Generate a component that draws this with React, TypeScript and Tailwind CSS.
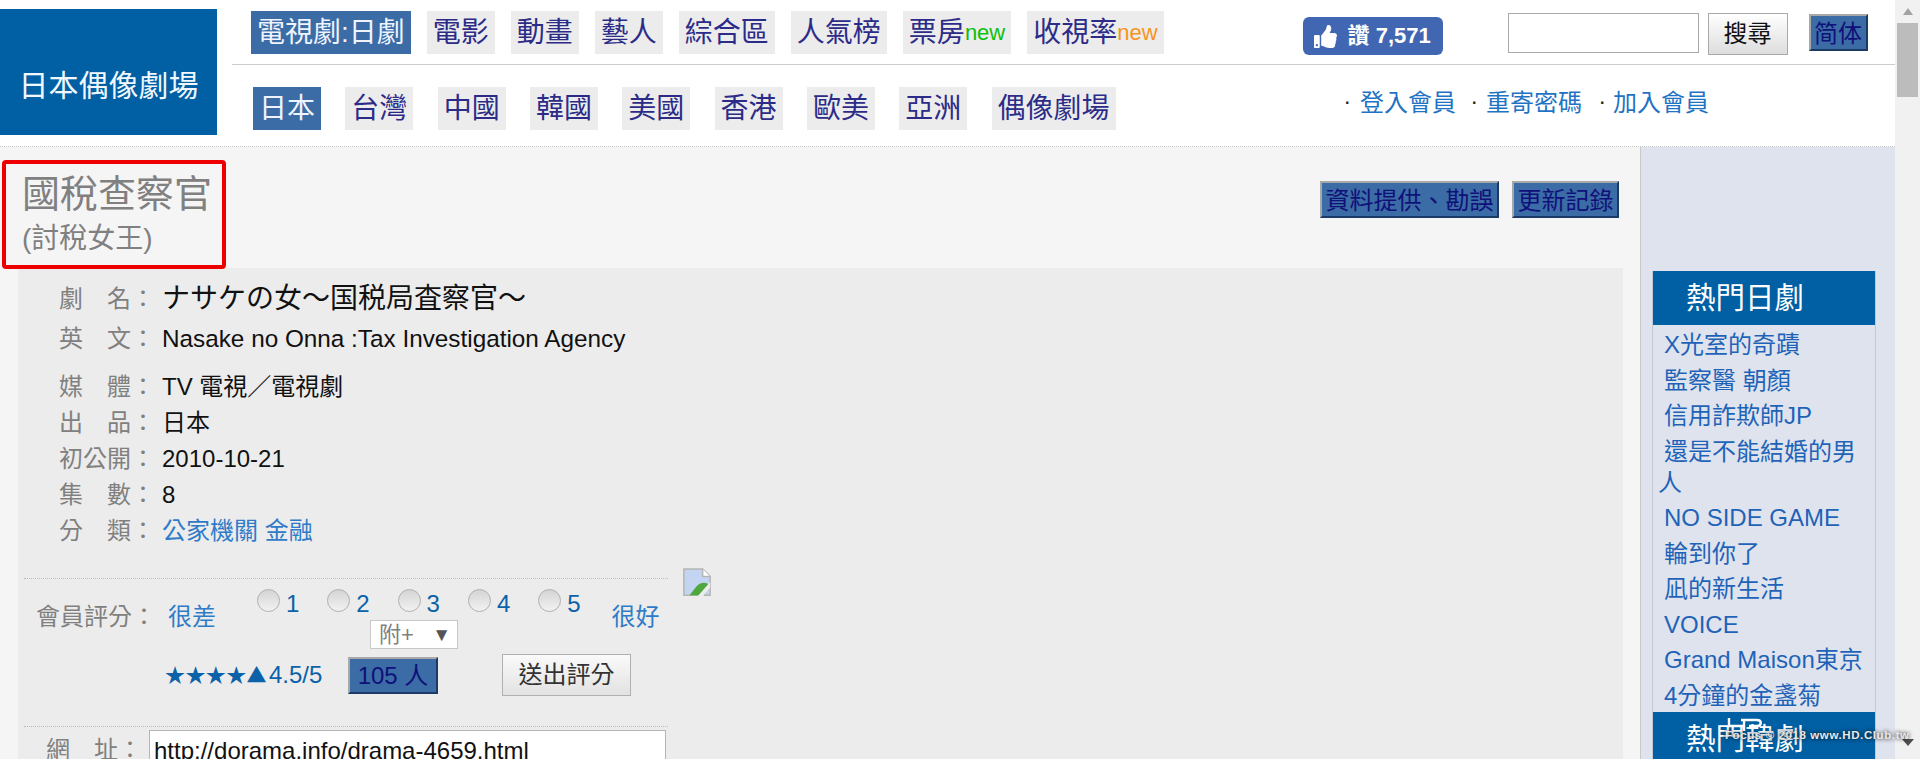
import React from "react";
import { FaThumbsUp } from "react-icons/fa";

const topNav = ["電影", "動畫", "藝人", "綜合區", "人氣榜"];
const subNav = ["台灣", "中國", "韓國", "美國", "香港", "歐美", "亞洲", "偶像劇場"];
const hot = ["X光室的奇蹟", "監察醫 朝顏", "信用詐欺師JP", "還是不能結婚的男人", "NO SIDE GAME", "輪到你了", "凪的新生活", "VOICE", "Grand Maison東京", "4分鐘的金盞菊"];

function NavItem({ children, active }: { children: React.ReactNode; active?: boolean }) {
  return (
    <a className={active ? "flex h-[43px] items-center bg-[#3b6ca5] px-[6px] text-[28px] leading-none whitespace-nowrap text-[#eef4ff]" : "flex h-[43px] items-center bg-[#ececec] px-[6px] text-[28px] leading-none whitespace-nowrap text-[#2c2c88]"}>
      {children}
    </a>
  );
}

function InfoRow({ label, children, className }: { label: string; children: React.ReactNode; className?: string }) {
  return (
    <div className={"flex items-center text-[24px] " + (className ?? "h-[36px]")}>
      <span className="w-[103px] shrink-0 whitespace-nowrap text-[#808080]">{label}</span>
      <span className="whitespace-nowrap text-[#111]">{children}</span>
    </div>
  );
}

function BlueBtn({ children, className }: { children: React.ReactNode; className: string }) {
  return (
    <a className={"flex items-center justify-center border-t-2 border-r-2 border-b-2 border-l-2 border-t-[#a8a8a8] border-r-[#1c3a66] border-b-[#1c3a66] border-l-[#a8a8a8] bg-[#3b6ca5] pt-[2px] text-[24px] leading-none whitespace-nowrap text-[#10107a] " + className}>
      {children}
    </a>
  );
}

function Radio({ n }: { n: number }) {
  return (
    <label className="flex w-[70.3px] items-start">
      <input type="radio" name="score" className="mt-[8px] h-[23px] w-[23px] appearance-none rounded-full border border-[#b0b0b0] bg-gradient-to-b from-[#d4d4d4] to-[#f2f2f2]" />
      <span className="mt-[8px] ml-[6px] text-[24px] leading-[30px] text-[#0b62a8]">{n}</span>
    </label>
  );
}

function HotHeader({ children }: { children: React.ReactNode }) {
  return <div className="flex h-[54px] shrink-0 items-center bg-[#0060a3] pl-[33px] text-[29.5px] leading-none text-white">{children}</div>;
}

export default function App() {
  return (
    <div className="relative flex h-[759px] w-[1920px] overflow-hidden bg-white [font-family:'Liberation_Sans','Noto_Sans_CJK_TC',sans-serif]">
      <div className="flex w-[1895px] shrink-0 flex-col">
        {/* header */}
        <header className="flex h-[147px] shrink-0 border-b border-dotted border-b-[#c8c8c8]">
          <div className="mt-[9px] flex h-[126px] w-[217px] shrink-0 items-center justify-center bg-[#0060a3] pt-[28px] text-[30px] leading-none whitespace-nowrap text-[#f2f8ff]">日本偶像劇場</div>
          <div className="ml-[15px] flex-1">
            <div className="flex h-[65px] items-start border-b border-b-[#cccccc] pt-[11px] pl-[19px]">
              <nav className="flex gap-[16px]">
                <NavItem active>電視劇:日劇</NavItem>
                {topNav.map((t) => <NavItem key={t}>{t}</NavItem>)}
                <NavItem>票房<span className="text-[22px] text-[#0cc00c]">new</span></NavItem>
                <NavItem>收視率<span className="text-[22px] text-[#f7941d]">new</span></NavItem>
              </nav>
              <a className="mt-[6px] ml-[139px] flex h-[38px] w-[140px] shrink-0 items-center rounded-[6px] bg-[#4267b2] pl-[11px] text-white">
                <FaThumbsUp className="h-[23px] w-[23px]" />
                <span className="ml-[11px] text-[22px] leading-none font-bold whitespace-nowrap">讚 7,571</span>
              </a>
              <input aria-label="search" className="mt-[2px] ml-[65px] h-[40px] w-[191px] shrink-0 border border-[#a9a9a9] bg-white" />
              <button className="mt-[2px] ml-[9px] flex h-[42px] w-[80px] shrink-0 items-center justify-center border border-[#a9a9a9] bg-gradient-to-b from-[#ffffff] to-[#dddddd] text-[24px] leading-none text-[#111]">搜尋</button>
              <BlueBtn className="mt-[3px] ml-[21px] h-[37px] w-[59px] shrink-0">简体</BlueBtn>
            </div>
            <div className="flex pt-[22px] pl-[21px]">
              <nav className="flex gap-[24.3px]">
                <NavItem active>日本</NavItem>
                {subNav.map((t) => <NavItem key={t}>{t}</NavItem>)}
              </nav>
              <div className="mt-[-1px] ml-[229.6px] flex h-[33px] items-center text-[24px] leading-none whitespace-nowrap text-[#1f73c4]">
                <span className="w-[15px] text-[16px] font-bold text-[#222]">·</span><a>登入會員</a>
                <span className="ml-[16px] w-[14px] text-[16px] font-bold text-[#222]">·</span><a>重寄密碼</a>
                <span className="ml-[18px] w-[13px] text-[16px] font-bold text-[#222]">·</span><a>加入會員</a>
              </div>
            </div>
          </div>
        </header>

        <div className="flex min-h-0 flex-1">
          {/* content */}
          <main className="w-[1640px] shrink-0 overflow-hidden bg-[#f5f5f5]">
            <div className="flex h-[121px] justify-between pr-[21px]">
              <div className="pt-[24px] pl-[22px] text-[#808080]">
                <h1 className="text-[38px] leading-[46px] font-normal">國稅查察官</h1>
                <p className="mt-[-1px] text-[28px] leading-[46px]">(討稅女王)</p>
              </div>
              <div className="mt-[34px] flex gap-[13px]">
                <BlueBtn className="h-[37px] w-[179px]">資料提供、勘誤</BlueBtn>
                <BlueBtn className="h-[37px] w-[107px]">更新記錄</BlueBtn>
              </div>
            </div>

            <div className="ml-[18px] h-[491px] w-[1605px] bg-[#ececec]">
              <div className="pt-[13px] pl-[41px]">
                <InfoRow label="劇　名：">
                  <span className="text-[28px]">ナサケの女～国税局査察官～</span>
                </InfoRow>
                <InfoRow label="英　文：" className="mt-[4px] h-[36px]"><span className="text-[24.3px]">Nasake no Onna :Tax Investigation Agency</span></InfoRow>
                <InfoRow label="媒　體：" className="mt-[12px] h-[36px]">TV 電視／電視劇</InfoRow>
                <InfoRow label="出　品：">日本</InfoRow>
                <InfoRow label="初公開：">2010-10-21</InfoRow>
                <InfoRow label="集　數：" className="h-[36px]">8</InfoRow>
                <InfoRow label="分　類：" className="h-[36px]"><a className="text-[#2f7bc8]">公家機關 金融</a></InfoRow>
              </div>

              {/* rating */}
              <div className="mt-[29px] ml-[6px] flex">
                <div className="flex h-[148px] w-[644px] border-t border-dotted border-t-[#bdbdbd]">
                  <div className="mt-[23px] w-[141px] shrink-0 pl-[12px] text-[24px] leading-[30px] whitespace-nowrap text-[#808080]">會員評分：</div>
                  <div className="flex-1 pt-[2px]">
                    <div className="flex h-[39px] items-start text-[24px] text-[#2f7bc8]">
                      <a className="mt-[21px] ml-[3px] w-[48px] leading-[30px] whitespace-nowrap">很差</a>
                      <div className="ml-[41px] flex w-[351.5px]">
                        {[1, 2, 3, 4, 5].map((n) => <Radio key={n} n={n} />)}
                      </div>
                      <a className="mt-[21px] ml-[3px] leading-[30px] whitespace-nowrap">很好</a>
                    </div>
                    <div className="ml-[205px] flex h-[29px] w-[88px] items-center justify-between border border-[#c8c8c8] bg-white pr-[6px] pl-[8px] text-[22px] leading-none text-[#808080]">
                      <span>附+</span>
                      <span className="text-[19px] text-[#555]">▼</span>
                    </div>
                    <div className="mt-[5px] flex h-[42px] items-center">
                      <span className="flex w-[158px] items-center leading-none whitespace-nowrap text-[#0b62a8]">
                        <span className="text-[20px] tracking-[0.4px] [font-family:'Noto_Sans_CJK_TC',sans-serif]">★★★★▲</span>
                        <span className="ml-[2px] text-[24px]">4.5/5</span>
                      </span>
                      <BlueBtn className="ml-[25px] h-[37px] w-[90px]">105 人</BlueBtn>
                      <button className="ml-[64px] flex h-[42px] w-[129px] items-center justify-center border border-[#b0b0b0] bg-gradient-to-b from-[#fafafa] to-[#e2e2e2] text-[24px] leading-none text-[#333]">送出評分</button>
                    </div>
                  </div>
                </div>
                <svg className="mt-[-11px] ml-[14px] shrink-0" width="30" height="30" viewBox="0 0 16 16">
                  <path d="M1 1h10l4 4v10H1z" fill="#c3d5f2" stroke="#b5b5b5" strokeWidth="0.8" />
                  <path d="M11 1v4h4" fill="#fff" stroke="#b5b5b5" strokeWidth="0.8" />
                  <path d="M4 15l4-5c2-2 4-2 6-1v3l-2 3z" fill="#4fa83d" />
                  <path d="M15 8L8 16h3l4-5z" fill="#ececec" />
                </svg>
              </div>

              {/* url */}
              <div className="ml-[6px] flex w-[644px] border-t border-dotted border-t-[#bdbdbd]">
                <span className="mt-[8px] w-[125px] shrink-0 pl-[22px] text-[24px] leading-[30px] whitespace-nowrap text-[#808080]">網　址：</span>
                <div className="mt-[3px] flex h-[44px] w-[517px] shrink-0 items-start border border-[#b5b5b5] bg-white pt-[5px] pl-[4px] text-[24px] leading-[30px] text-[#111]">http://dorama.info/drama-4659.html</div>
              </div>
            </div>
          </main>

          {/* sidebar */}
          <aside className="w-[255px] shrink-0 border-l border-l-[#c9c9c9] bg-[#dfe3ee] pt-[124px] pl-[12px]">
            <div className="ml-[-1px] w-[224px] border-r border-l border-r-[#c4c8d6] border-l-[#c4c8d6]">
              <HotHeader>熱門日劇</HotHeader>
              <ul className="h-[387px] pt-[2px] pr-[2px] pl-[5px] text-[24px] leading-[31px] text-[#1f63b8]">
                {hot.map((t) => <li key={t} className="py-[2.25px] indent-[6px]"><a>{t}</a></li>)}
              </ul>
              <HotHeader>熱門韓劇</HotHeader>
            </div>
          </aside>
        </div>
      </div>

      {/* scrollbar */}
      <div className="flex w-[25px] shrink-0 flex-col items-center bg-[#f1f1f1]">
        <div className="mt-[8px] h-0 w-0 border-r-[5px] border-b-[7px] border-l-[5px] border-r-transparent border-b-[#a3a3a3] border-l-transparent" />
        <div className="mt-[8px] h-[74px] w-[21px] bg-[#bcbcbc]" />
        <div className="mt-[642px] h-0 w-0 border-t-[7px] border-r-[6px] border-l-[6px] border-t-[#505050] border-r-transparent border-l-transparent" />
      </div>

      {/* red annotation */}
      <div className="absolute top-[160px] left-[2px] h-[109px] w-[224px] rounded-[4px] border-[4px] border-[#ee0000]" />

      {/* watermark */}
      <div className="absolute top-[718px] left-[1725px] w-[175px] text-[#e8e8e8]">
        <svg className="ml-[2px]" width="37" height="13" viewBox="0 0 37 13" fill="none" stroke="#ffffff" strokeWidth="2.4">
          <path d="M2 0v8h15M17 3v10M14 2h16c5 0 5 6 0 6H22" />
        </svg>
        <div className="mt-[-3px] text-[11.5px] leading-[14px] font-bold tracking-[0.6px] whitespace-nowrap [text-shadow:0_0_4px_#000]">Focus © 2018 www.HD.Club.tw</div>
      </div>
    </div>
  );
}
